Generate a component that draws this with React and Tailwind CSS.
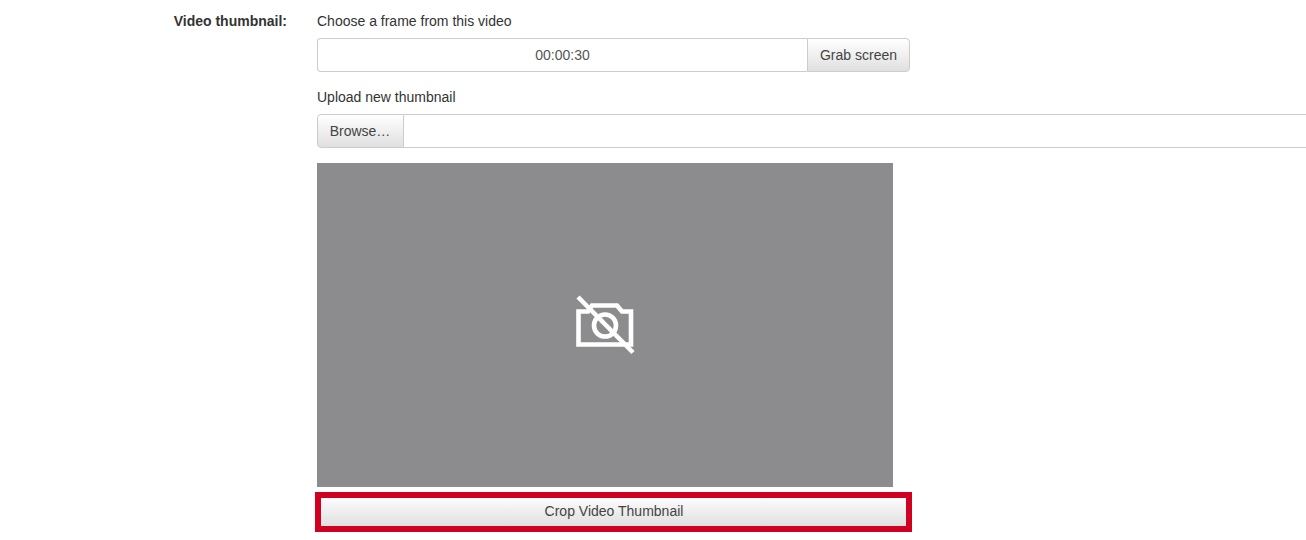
export default function App() {
  return (
    <div className="h-[540px] w-[1306px] overflow-hidden bg-white font-['Liberation_Sans',Arial,sans-serif] text-sm text-[#333333] flex">
      <div className="w-[287px] shrink-0 pt-[12px] text-right font-bold leading-[18px]">Video thumbnail:</div>
      <div className="ml-[30px] flex-1 min-w-0 pt-[12px]">
        <div className="leading-[18px]">Choose a frame from this video</div>
        <div className="mt-[8px] flex h-[34px] w-[593px]">
          <div className="flex-1 flex items-center justify-center rounded-l-[4px] border border-r-0 border-[#cccccc] bg-white text-[#555555]">00:00:30</div>
          <button className="w-[103px] rounded-r-[4px] border border-[#cccccc] bg-gradient-to-b from-white to-[#e0e0e0] text-[#444444]">Grab screen</button>
        </div>
        <div className="mt-[16px] leading-[18px]">Upload new thumbnail</div>
        <div className="mt-[8px] flex h-[34px] w-[989px]">
          <button className="w-[87px] shrink-0 rounded-l-[4px] border border-[#cccccc] bg-gradient-to-b from-white to-[#e0e0e0] pr-[1px] text-[#444444]">Browse…</button>
          <div className="flex-1 border-y border-[#cccccc] bg-white"></div>
        </div>
        <div className="mt-[15px] flex h-[324px] w-[576px] items-center justify-center bg-[#8c8c8e]">
          <svg width="60" height="60" viewBox="0 0 60 60" fill="none" stroke="white" strokeWidth="4.6">
            <path d="M3.5 16.5 H13 L17 10.5 H42 L47 16.5 H56 V49.5 H3.5 Z" strokeLinejoin="miter" />
            <circle cx="30" cy="30.5" r="11" />
            <path d="M3 2 L58 57.5" />
          </svg>
        </div>
        <div className="-ml-[2px] mt-[5px] h-[40px] w-[597px] border-[6px] border-[#cf0022]">
          <button className="block h-full w-full bg-gradient-to-b from-[#fcfcfc] to-[#e0e0e0] pb-[2px] pl-[1px] text-[#444444]">Crop Video Thumbnail</button>
        </div>
      </div>
    </div>
  );
}
